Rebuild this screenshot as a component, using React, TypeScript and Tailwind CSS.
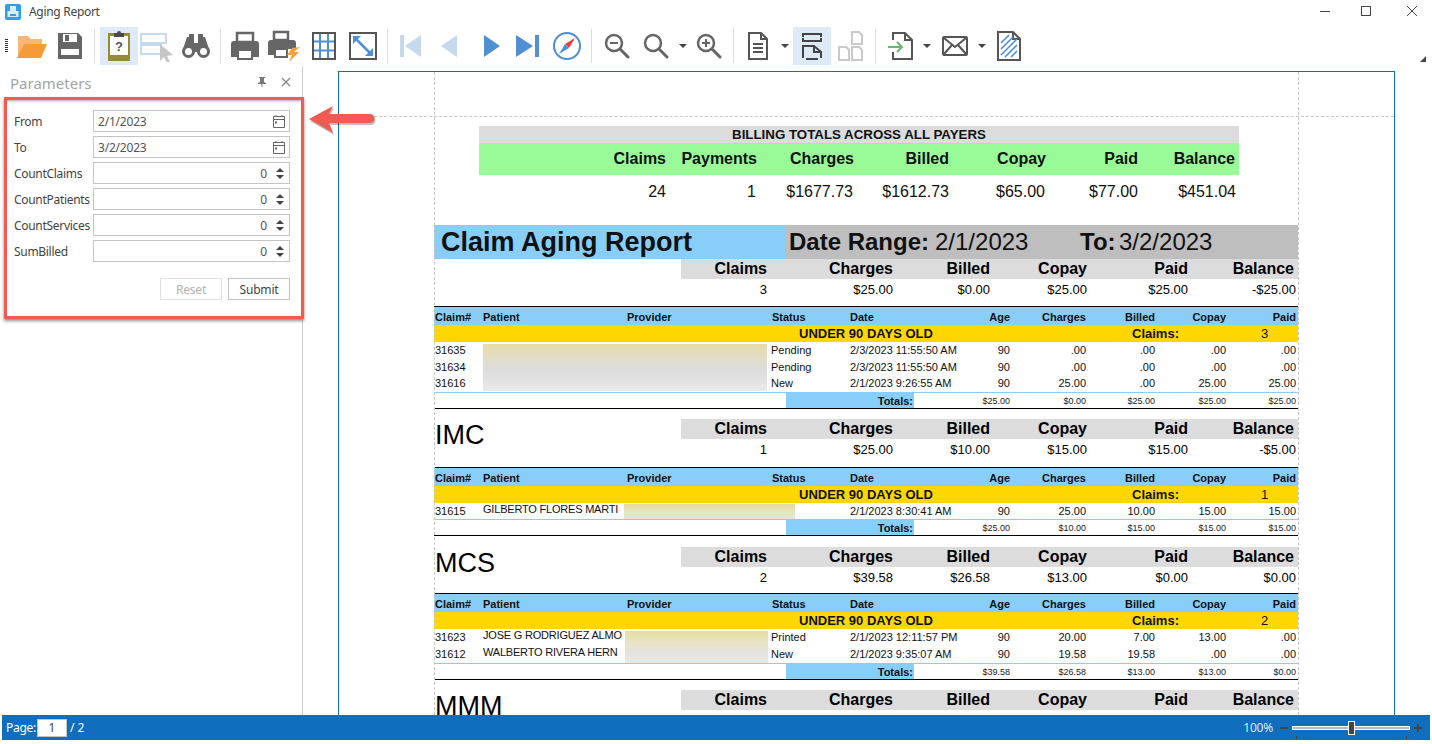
import type { ReactNode } from "react";

const GRAY = "#666666";
const BLUE = "#4f8fd2";
const PALE = "#c4d8ee";

function Tb({ children, active, className = "" }: { children: ReactNode; active?: boolean; className?: string }) {
  return (
    <div className={`flex h-[38px] w-[38px] shrink-0 items-center justify-center ${active ? "bg-[#deeaf7]" : ""} ${className}`}>
      {children}
    </div>
  );
}

function Sep({ className = "" }: { className?: string }) {
  return (
    <div className={`flex h-[38px] shrink-0 items-center justify-center ${className}`}>
      <div className="h-[34px] w-px bg-[#dcdcdc]" />
    </div>
  );
}

function Drop({ className = "" }: { className?: string }) {
  return (
    <div className={`flex h-[38px] w-[15px] shrink-0 items-center justify-center ${className}`}>
      <div className="h-0 w-0 border-x-[4px] border-t-[4px] border-x-transparent border-t-[#444]" />
    </div>
  );
}

function Ico({ children, w = 32, h = 32 }: { children: ReactNode; w?: number; h?: number }) {
  return (
    <svg width={w} height={h} viewBox={`0 0 ${w} ${h}`} fill="none">
      {children}
    </svg>
  );
}

function Toolbar() {
  return (
    <div className="flex h-[40px] shrink-0 items-center pl-[5px]">
      <div className="mr-[5px] h-[14px] w-[3px] bg-[repeating-linear-gradient(#333_0,#333_1px,transparent_1px,transparent_2px)]" />
      <Tb>
        <Ico>
          <path d="M2 27V6h10l3 3h11v5H9L2 27z" fill="#fbb677" />
          <path d="M1 28l7-14h23l-6 14H1z" fill="#f79a38" />
        </Ico>
      </Tb>
      <Tb>
        <Ico>
          <path d="M4 3h20l4 4v22H4V3z" fill={GRAY} />
          <rect x="9" y="4" width="14" height="8" fill="#fff" />
          <rect x="11" y="5" width="4" height="6" fill={GRAY} />
          <rect x="7" y="19" width="18" height="6" fill="#fff" />
        </Ico>
      </Tb>
      <Sep className="w-[11px]" />
      <Tb active>
        <Ico>
          <rect x="5" y="3" width="22" height="28" fill="#978a33" />
          <rect x="7" y="6" width="18" height="19" fill="#fff" />
          <path d="M11 3h3a2 2 0 014 0h3v4H11V3z" fill="#4a4a4a" />
          <text x="16" y="21" textAnchor="middle" fontSize="13" fontWeight="700" fill="#555" fontFamily="Liberation Sans">?</text>
        </Ico>
      </Tb>
      <Tb>
        <Ico w={34} h={32}>
          <rect x="1" y="4" width="25" height="9" stroke={PALE} strokeWidth="2" />
          <rect x="1" y="15" width="20" height="9" stroke={PALE} strokeWidth="2" />
          <path d="M20 14l13 11-6 1 3 6-3 1-3-6-4 4V14z" fill="#c6c6c6" />
        </Ico>
      </Tb>
      <Tb className="ml-px">
        <Ico w={30} h={26}>
          <path d="M6 4h7v6h4V4h7l5 15H1L6 4z" fill={GRAY} />
          <path d="M8 1h5v4H8zM17 1h5v4h-5z" fill={GRAY} />
          <circle cx="7.5" cy="18.5" r="5" fill="#fff" stroke={GRAY} strokeWidth="3" />
          <circle cx="22.5" cy="18.5" r="5" fill="#fff" stroke={GRAY} strokeWidth="3" />
        </Ico>
      </Tb>
      <Sep className="w-[11px]" />
      <Tb>
        <Ico>
          <rect x="8" y="3" width="16" height="9" stroke={GRAY} strokeWidth="2.5" />
          <path d="M5 11h22a3 3 0 013 3v13h-6v-6H8v6H2V14a3 3 0 013-3z" fill={GRAY} />
          <rect x="9" y="20" width="14" height="9" fill="#fff" stroke={GRAY} strokeWidth="2" />
        </Ico>
      </Tb>
      <Tb className="ml-px">
        <Ico w={34} h={32}>
          <rect x="7" y="2" width="14" height="8" stroke={GRAY} strokeWidth="2.5" />
          <path d="M4 10h22a3 3 0 013 3v6h-8l-3 6H1V13a3 3 0 013-3z" fill={GRAY} />
          <rect x="8" y="19" width="12" height="8" fill="#fff" stroke={GRAY} strokeWidth="2" />
          <path d="M33 17l-8 1-5 7h5l-3 7 10-10h-5l6-5z" fill="#f6a13a" />
        </Ico>
      </Tb>
      <Tb className="ml-[2px]">
        <Ico w={24} h={28}>
          <path d="M8 1v26M16 1v26M1 9.5h22M1 18.5h22" stroke={BLUE} strokeWidth="2" />
          <rect x="1" y="1" width="22" height="26" stroke="#555" strokeWidth="2" />
        </Ico>
      </Tb>
      <Tb className="ml-px">
        <Ico w={28} h={28}>
          <rect x="1" y="1" width="26" height="26" stroke="#555" strokeWidth="2" />
          <path d="M7 7l14 14" stroke={BLUE} strokeWidth="2.5" />
          <path d="M4 4h8L4 12V4zM24 24h-8l8-8v8z" fill={BLUE} />
        </Ico>
      </Tb>
      <Sep className="w-[10px]" />
      <Tb>
        <Ico w={22} h={24}>
          <rect x="0" y="1" width="4" height="22" fill={PALE} />
          <path d="M21 1v22L5 12 21 1z" fill={PALE} />
        </Ico>
      </Tb>
      <Tb>
        <Ico w={16} h={24}>
          <path d="M16 1v22L0 12 16 1z" fill={PALE} />
        </Ico>
      </Tb>
      <Tb className="ml-[5px]">
        <Ico w={16} h={24}>
          <path d="M0 1v22l16-11L0 1z" fill={BLUE} />
        </Ico>
      </Tb>
      <Tb className="ml-[-2px]">
        <Ico w={24} h={24}>
          <path d="M0 1v22l17-11L0 1z" fill={BLUE} />
          <rect x="19" y="1" width="4" height="22" fill={BLUE} />
        </Ico>
      </Tb>
      <Tb className="ml-px">
        <Ico w={30} h={30}>
          <circle cx="15" cy="15" r="13" fill="#fff" stroke={BLUE} strokeWidth="2" />
          <path d="M23 7l-10 6 4 4 6-10z" fill="#ef3b3b" />
          <path d="M7 23l6-10 4 4-10 6z" fill={BLUE} />
        </Ico>
      </Tb>
      <Sep className="w-[10px]" />
      <Tb className="ml-[2px]">
        <Ico w={26} h={26}>
          <circle cx="10" cy="10" r="8" stroke="#666" strokeWidth="2.5" />
          <path d="M16 16l8 8" stroke="#666" strokeWidth="3" strokeLinecap="round" />
          <path d="M6 10h8" stroke="#666" strokeWidth="2" />
        </Ico>
      </Tb>
      <Tb className="ml-px">
        <Ico w={26} h={26}>
          <circle cx="10" cy="10" r="8" stroke="#666" strokeWidth="2.5" />
          <path d="M16 16l8 8" stroke="#666" strokeWidth="3" strokeLinecap="round" />
        </Ico>
      </Tb>
      <Drop />
      <Tb>
        <Ico w={26} h={26}>
          <circle cx="10" cy="10" r="8" stroke="#666" strokeWidth="2.5" />
          <path d="M16 16l8 8" stroke="#666" strokeWidth="3" strokeLinecap="round" />
          <path d="M6 10h8M10 6v8" stroke="#666" strokeWidth="2" />
        </Ico>
      </Tb>
      <Sep className="w-[10px]" />
      <Tb className="ml-px">
        <Ico w={20} h={28}>
          <path d="M1 1h12l6 6v20H1V1z" stroke="#555" strokeWidth="2" />
          <path d="M13 1v6h6" stroke="#555" strokeWidth="2" />
          <path d="M5 12h10M5 16h10M5 20h10" stroke="#555" strokeWidth="2" />
        </Ico>
      </Tb>
      <Drop className="mr-px" />
      <Tb active>
        <Ico w={20} h={28}>
          <path d="M1 5V2h18v3M1 6v3h18V6" stroke="#444" strokeWidth="2" />
          <path d="M1 26V14h11l7 6v6M4 27h12" stroke="#444" strokeWidth="2" />
          <path d="M12 14v6h7" stroke="#444" strokeWidth="2" />
        </Ico>
      </Tb>
      <Tb className="ml-px">
        <Ico w={26} h={30}>
          <path d="M14 1h7l3 3v9H14V1zM1 16h7l3 3v10H1V16zM14 16h7l3 3v10H14V16z" stroke="#c9c9c9" strokeWidth="2" />
        </Ico>
      </Tb>
      <Sep className="w-[11px]" />
      <Tb>
        <Ico w={26} h={28}>
          <path d="M6 8V1h12l7 7v19H6v-7" stroke="#555" strokeWidth="2" />
          <path d="M18 1v7h7" stroke="#555" strokeWidth="2" />
          <path d="M1 15h14M10 10l5 5-5 5" stroke="#66bb6a" strokeWidth="2" />
        </Ico>
      </Tb>
      <Drop />
      <Tb className="ml-[2px]">
        <Ico w={26} h={20}>
          <rect x="1" y="1" width="24" height="18" rx="1" stroke="#555" strokeWidth="2" />
          <path d="M2 2l11 9 11-9M2 18l8-9M24 18l-8-9" stroke="#555" strokeWidth="2" />
        </Ico>
      </Tb>
      <Drop />
      <Tb className="ml-px">
        <Ico w={24} h={30}>
          <path d="M1 1h15l7 7v21H1V1z" stroke="#555" strokeWidth="2" />
          <path d="M16 1v7h7" stroke="#555" strokeWidth="2" />
          <path d="M4 12l8-8M4 18l12-12M4 24l16-16M8 26l12-12M14 26l6-6" stroke={BLUE} strokeWidth="1.6" />
        </Ico>
      </Tb>
    </div>
  );
}

function Field({ label, value, date }: { label: string; value: string; date?: boolean }) {
  return (
    <div className="flex h-[26px] items-center">
      <span className="w-[79px] shrink-0 pt-[2px] text-[12px] tracking-[-0.3px] text-[#444]">{label}</span>
      <div className={`flex h-[22px] w-[197px] items-center border border-[#c4c4c4] text-[12px] tracking-[-0.2px] text-[#555] ${date ? "pl-[4px] pr-[2px]" : "justify-end pr-[2px]"}`}>
        {date ? (
          <>
            <span className="flex-1 pt-[2px]">{value}</span>
            <svg width="14" height="14" viewBox="0 0 14 14" fill="none" className="mr-px">
              <path d="M1.5 2.5h11v11h-11zM1.5 5.5h11M4 1v2M10 1v2" stroke="#666" />
              <rect x="3" y="7.5" width="2" height="2" fill="#666" />
            </svg>
          </>
        ) : (
          <>
            <span className="pt-[2px]">{value}</span>
            <div className="ml-[7px] mr-px flex w-[12px] flex-col items-center gap-[3px]">
              <div className="h-0 w-0 border-x-[4px] border-b-[4px] border-x-transparent border-b-[#444]" />
              <div className="h-0 w-0 border-x-[4px] border-t-[4px] border-x-transparent border-t-[#444]" />
            </div>
          </>
        )}
      </div>
    </div>
  );
}

function ParamsPanel() {
  return (
    <div className="h-full w-[303px] shrink-0 border-r border-[#cfcfcf]">
      <div className="flex h-[31px] items-end justify-between pb-[4px] pl-[10px] pr-[11px]">
        <span className="text-[15px] leading-[20px] text-[#a3a3a3]">Parameters</span>
        <div className="mb-[6px] flex items-center gap-[15px]">
          <svg width="8" height="10" viewBox="0 0 8 10">
            <path d="M1 0h6v1H6v4l2 1v1H4.5v3h-1V7H0V6l2-1V1H1z" fill="#777" />
          </svg>
          <svg width="10" height="10" viewBox="0 0 10 10">
            <path d="M1 1l8 8M9 1L1 9" stroke="#888" strokeWidth="1.3" />
          </svg>
        </div>
      </div>
      <div className="ml-[4px] h-[222px] w-[300px] border-[3px] border-[#f25a52] pl-[7px] pt-[8px] shadow-[0_2px_3px_rgba(0,0,0,0.45),inset_0_3px_3px_-2px_rgba(0,0,0,0.35)]">
        <Field label="From" value="2/1/2023" date />
        <Field label="To" value="3/2/2023" date />
        <Field label="CountClaims" value="0" />
        <Field label="CountPatients" value="0" />
        <Field label="CountServices" value="0" />
        <Field label="SumBilled" value="0" />
        <div className="mt-[14px] flex justify-end gap-[6px] pr-[11px] text-[12px] tracking-[-0.2px]">
          <div className="flex h-[22px] w-[62px] items-center justify-center border border-[#e2e2e2] pt-[2px] text-[#b4b4b4]">Reset</div>
          <div className="flex h-[22px] w-[62px] items-center justify-center border border-[#c4c4c4] pt-[2px] text-[#444]">Submit</div>
        </div>
      </div>
    </div>
  );
}

const SUM_HEAD = ["Claims", "Charges", "Billed", "Copay", "Paid", "Balance"];

function Summary({ name, values, className = "" }: { name?: string; values?: string[]; className?: string }) {
  return (
    <div className={`flex ${className}`}>
      <div className="w-[247px] shrink-0 pl-px text-[27px] leading-[32px] text-black">{name}</div>
      <div className="flex-1">
        <div className="grid h-[20px] grid-cols-[86px_126px_97px_97px_101px_106px] bg-[#dcdcdc] text-right text-[16px] font-bold leading-[19px] text-black">
          {SUM_HEAD.map((c) => (
            <span key={c}>{c}</span>
          ))}
        </div>
        {values && (
          <div className="grid h-[20px] grid-cols-[86px_126px_97px_97px_101px_108px] text-right text-[13px] leading-[21px] text-black">
            {values.map((c, i) => (
              <span key={i}>{c}</span>
            ))}
          </div>
        )}
      </div>
    </div>
  );
}

const DETAIL = "grid grid-cols-[49px_144px_144px_79px_100px_60px_76px_69px_71px_70px]";

function Row({ cells }: { cells: string[] }) {
  return (
    <div className={`${DETAIL} h-[16.5px] text-[11px] leading-[16px] text-[#111]`}>
      {cells.map((c, i) =>
        i === 1 ? (
          <span key={i} className="relative top-[-2px] whitespace-nowrap tracking-[-0.2px]">{c}</span>
        ) : (
          <span key={i} className={`${i > 4 ? "text-right" : ""} ${i === 0 ? "pl-px" : ""} whitespace-nowrap`}>{c}</span>
        ),
      )}
    </div>
  );
}

function Detail({ rows, rowsClass, claims, totals, blur, className = "" }: { rows: string[][]; rowsClass: string; claims: string; totals: string[]; blur: ReactNode; className?: string }) {
  return (
    <div className={`border-b border-black ${className}`}>
      <div className={`${DETAIL} h-[19px] border-t border-black bg-[#87cefa] text-[11px] font-bold leading-[20px] text-[#111]`}>
        <span className="pl-px">Claim#</span>
        <span>Patient</span>
        <span>Provider</span>
        <span className="pl-px">Status</span>
        <span>Date</span>
        <span className="text-right">Age</span>
        <span className="text-right">Charges</span>
        <span className="text-right">Billed</span>
        <span className="text-right">Copay</span>
        <span className="text-right">Paid</span>
      </div>
      <div className="relative h-[17px] bg-[#ffd700] text-[13px] font-bold leading-[17px] text-[#111]">
        <span className="absolute left-[365px]">UNDER 90 DAYS OLD</span>
        <span className="absolute left-[698px]">Claims:</span>
        <span className="absolute left-[827px] font-normal">{claims}</span>
      </div>
      <div className={`relative ${rowsClass}`}>
        {rows.map((r, i) => (
          <Row key={i} cells={r} />
        ))}
        {blur}
      </div>
      <div className="flex h-[16px] border-t border-[#87cefa]">
        <div className="ml-[352px] w-[128px] bg-[#87cefa] pr-px text-right text-[11px] font-bold leading-[16px] text-[#111]">Totals:</div>
        <div className="grid flex-1 grid-cols-[96px_76px_69px_71px_70px] text-right text-[9px] leading-[16px] text-[#222]">
          {totals.map((t, i) => (
            <span key={i}>{t}</span>
          ))}
        </div>
      </div>
    </div>
  );
}

function ReportPage() {
  return (
    <div className="relative h-full w-[1057px] overflow-hidden border-x border-t border-[#106ebe] bg-white font-['Liberation_Sans',Arial,sans-serif]">
      <div className="h-[45px]" />
      <div className="ml-[140px] mt-[9px] w-[760px]">
        <div className="h-[17px] bg-[#dcdcdc] text-center text-[13.3px] font-bold leading-[17px] text-[#111]">BILLING TOTALS ACROSS ALL PAYERS</div>
        <div className="grid h-[32px] grid-cols-[187px_91px_97px_95px_97px_92px_97px] bg-[#98fb98] text-right text-[16px] font-bold leading-[32px] text-[#111]">
          <span>Claims</span>
          <span>Payments</span>
          <span>Charges</span>
          <span>Billed</span>
          <span>Copay</span>
          <span>Paid</span>
          <span>Balance</span>
        </div>
        <div className="grid h-[50px] grid-cols-[187px_90px_97px_96px_96px_93px_98px] pt-[7px] text-right text-[16px] leading-[20px] text-[#111]">
          <span>24</span>
          <span>1</span>
          <span>$1677.73</span>
          <span>$1612.73</span>
          <span>$65.00</span>
          <span>$77.00</span>
          <span>$451.04</span>
        </div>
      </div>

      <div className="ml-[95px] w-[864px]">
        <div className="flex h-[34px]">
          <div className="w-[352px] bg-[#87cefa] pl-[7px] text-[27px] font-bold leading-[34px] text-[#111]">Claim Aging Report</div>
          <div className="flex flex-1 items-center bg-[#bebebe] text-[24px] leading-[34px] text-[#111]">
            <span className="ml-[3px] w-[146px] font-bold">Date Range:</span>
            <span className="w-[145px]">2/1/2023</span>
            <span className="w-[39px] font-bold">To:</span>
            <span>3/2/2023</span>
          </div>
        </div>
        <Summary values={["3", "$25.00", "$0.00", "$25.00", "$25.00", "-$25.00"]} />
        <Detail
          className="mt-[7px]"
          rowsClass="h-[50px]"
          claims="3"
          rows={[
            ["31635", "", "", "Pending", "2/3/2023 11:55:50 AM", "90", ".00", ".00", ".00", ".00"],
            ["31634", "", "", "Pending", "2/3/2023 11:55:50 AM", "90", ".00", ".00", ".00", ".00"],
            ["31616", "", "", "New", "2/1/2023 9:26:55 AM", "90", "25.00", ".00", "25.00", "25.00"],
          ]}
          totals={["$25.00", "$0.00", "$25.00", "$25.00", "$25.00"]}
          blur={<div className="absolute left-[49px] top-[2px] h-[47px] w-[284px] bg-[linear-gradient(#e6dca8,#e2ddc0_22%,#dcdcdc_55%,#e9e9e9)]" />}
        />
        <Summary className="mt-[10px]" name="IMC" values={["1", "$25.00", "$10.00", "$15.00", "$15.00", "-$5.00"]} />
        <Detail
          className="mt-[8px]"
          rowsClass="h-[16px]"
          claims="1"
          rows={[["31615", "GILBERTO FLORES MARTI", "", "", "2/1/2023 8:30:41 AM", "90", "25.00", "10.00", "15.00", "15.00"]]}
          totals={["$25.00", "$10.00", "$15.00", "$15.00", "$15.00"]}
          blur={<div className="absolute left-[190px] top-px h-[15px] w-[171px] bg-[linear-gradient(#e6dc9e,#e8e3bf_55%,#e4e6da)]" />}
        />
        <Summary className="mt-[11px]" name="MCS" values={["2", "$39.58", "$26.58", "$13.00", "$0.00", "$0.00"]} />
        <Detail
          className="mt-[6px]"
          rowsClass="h-[34px]"
          claims="2"
          rows={[
            ["31623", "JOSE G RODRIGUEZ ALMO", "", "Printed", "2/1/2023 12:11:57 PM", "90", "20.00", "7.00", "13.00", ".00"],
            ["31612", "WALBERTO RIVERA HERN", "", "New", "2/1/2023 9:35:07 AM", "90", "19.58", "19.58", ".00", ".00"],
          ]}
          totals={["$39.58", "$26.58", "$13.00", "$13.00", "$0.00"]}
          blur={<div className="absolute left-[191px] top-[2px] h-[32px] w-[143px] bg-[linear-gradient(#e6dda0,#e8e4c4_35%,#e2e2e2_70%,#e8e8e8)]" />}
        />
        <Summary className="mt-[10px]" name="MMM" />
      </div>

      {/* dashed margin guides */}
      <div className="pointer-events-none absolute inset-y-0 left-[95px] w-[865px] border-x border-dashed border-[#c8c8c8]" />
      <div className="pointer-events-none absolute inset-x-0 top-[44px] border-t border-dashed border-[#c8c8c8]" />
    </div>
  );
}

export default function App() {
  return (
    <div className="relative flex h-[744px] w-[1432px] flex-col overflow-hidden bg-white font-['Noto_Sans',sans-serif] text-[#333]">
      <div className="flex h-[26px] shrink-0 items-center justify-between">
        <div className="flex items-center pb-[3px] pl-[5px]">
          <svg width="16" height="16" viewBox="0 0 16 16">
            <rect width="16" height="16" rx="2" fill="#2f9fe8" />
            <path d="M5 2h6v5H5zM2.5 7h11v6h-11z" fill="#d6eefc" />
            <path d="M5 10h6v2H5z" fill="#2f9fe8" />
          </svg>
          <span className="ml-[8px] text-[12px] tracking-[-0.3px] text-[#444]">Aging Report</span>
        </div>
        <div className="flex items-center pb-[5px]">
          <svg width="10" height="10" viewBox="0 0 10 10" className="mr-[31px]">
            <path d="M0 5.5h10" stroke="#444" />
          </svg>
          <svg width="10" height="10" viewBox="0 0 10 10" className="mr-[36px]">
            <rect x="0.5" y="0.5" width="9" height="9" fill="none" stroke="#444" />
          </svg>
          <svg width="10" height="10" viewBox="0 0 10 10" className="mr-[15px]">
            <path d="M0 0l10 10M10 0L0 10" stroke="#444" />
          </svg>
        </div>
      </div>
      <Toolbar />
      <div className="relative flex min-h-0 flex-1">
        <ParamsPanel />
        <div className="min-w-0 flex-1 pl-[35px] pt-[5px]">
          <ReportPage />
        </div>
        <div className="absolute right-[6px] top-[-10px] h-0 w-0 border-b-[6px] border-l-[6px] border-b-[#444] border-l-transparent" />
        {/* annotation arrow */}
        <svg width="70" height="36" viewBox="0 0 70 36" className="absolute left-[308px] top-[37px]">
          <path d="M1 16L25 3l-4 8h41a4.5 4.5 0 010 9H21l4 10L1 16z" fill="#000" opacity="0.25" transform="translate(1 2)" />
          <path d="M1 16L25 3l-4 8h41a4.5 4.5 0 010 9H21l4 10L1 16z" fill="#f25a52" />
        </svg>
      </div>
      <div className="mb-[4px] ml-[2px] mr-[2px] flex h-[25px] shrink-0 items-center justify-between bg-[#106ebe] text-[12px] text-white">
        <div className="flex items-center pl-[4px]">
          <span className="w-[31px] tracking-[-0.3px]">Page:</span>
          <div className="flex h-[18px] w-[30px] items-center justify-center border border-[#c4c4c4] bg-white text-[#444]">1</div>
          <span className="ml-[3px]">/ 2</span>
        </div>
        <div className="relative flex items-center pr-[8px]">
          <span className="tracking-[-0.2px] text-[#dbe9f6]">100%</span>
          <div className="ml-[7px] h-[2px] w-[8px] bg-[#444]" />
          <div className="relative mx-[4px] h-[4px] w-[118px] border border-white bg-[#bbb]">
            <div className="absolute left-[55px] top-[-6px] h-[14px] w-[7px] border border-white bg-[#444]" />
            <div className="absolute left-[3px] top-[9px] h-[3px] w-px bg-[#444]" />
            <div className="absolute left-[113px] top-[9px] h-[3px] w-px bg-[#444]" />
          </div>
          <svg width="8" height="8" viewBox="0 0 8 8">
            <path d="M0 4h8M4 0v8" stroke="#444" strokeWidth="2" />
          </svg>
        </div>
      </div>
    </div>
  );
}
